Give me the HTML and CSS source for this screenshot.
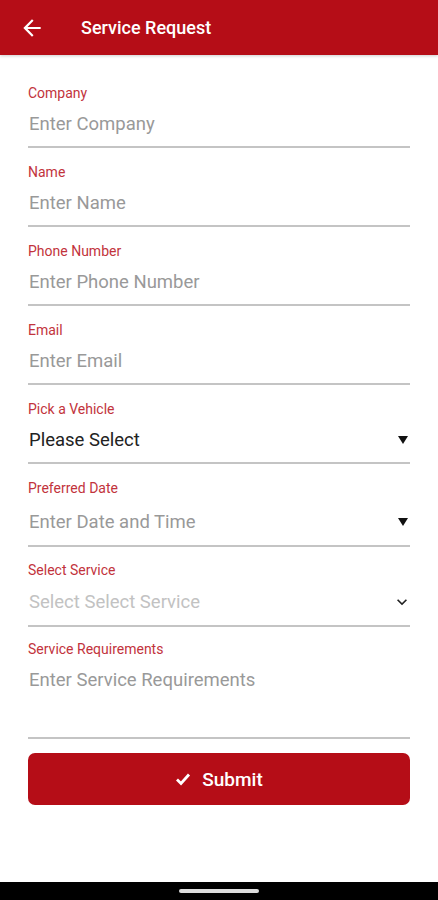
FILE: index.html
```html
<!DOCTYPE html>
<html lang="en">
<head>
    <meta charset="UTF-8">
    <meta name="viewport" content="width=device-width, initial-scale=1.0">
    <title>Service Request</title>
    <link rel="stylesheet" href="styles.css">
</head>
<body>
    <div class="page">
        <header class="toolbar">
            <svg class="back" viewBox="0 0 24 24"><path d="M20 11H7.83l5.59-5.59L12 4l-8 8 8 8 1.41-1.41L7.83 13H20v-2z"/></svg>
            <h1>Service Request</h1>
        </header>

        <form class="form">
            <div class="field">
                <label>Company</label>
                <div class="row placeholder">Enter Company</div>
            </div>
            <div class="field">
                <label>Name</label>
                <div class="row placeholder">Enter Name</div>
            </div>
            <div class="field">
                <label>Phone Number</label>
                <div class="row placeholder">Enter Phone Number</div>
            </div>
            <div class="field">
                <label>Email</label>
                <div class="row placeholder">Enter Email</div>
            </div>
            <div class="field">
                <label>Pick a Vehicle</label>
                <div class="row value">
                    <span>Please Select</span>
                    <svg class="caret" viewBox="0 0 10 8"><polygon points="0,0 10,0 5,8"/></svg>
                </div>
            </div>
            <div class="field field-date">
                <label>Preferred Date</label>
                <div class="row placeholder">
                    <span>Enter Date and Time</span>
                    <svg class="caret" viewBox="0 0 10 8"><polygon points="0,0 10,0 5,8"/></svg>
                </div>
            </div>
            <div class="field field-service">
                <label>Select Service</label>
                <div class="row placeholder light">
                    <span>Select Select Service</span>
                    <svg class="chevron" viewBox="0 0 24 24"><path d="M16.59 8.59L12 13.17 7.41 8.59 6 10l6 6 6-6z"/></svg>
                </div>
            </div>
            <div class="field field-notes">
                <label>Service Requirements</label>
                <div class="row placeholder">Enter Service Requirements</div>
            </div>

            <button type="button" class="submit">
                <svg class="check" viewBox="0 0 16 16"><path d="M2 8.5l4 4 8-9"/></svg>
                Submit
            </button>
        </form>

        <div class="navbar"><span class="handle"></span></div>
    </div>
</body>
</html>
```

FILE: styles.css
```css
body {
    margin: 0;
    font-family: Roboto, "Noto Sans", Arial, sans-serif;
    background: #fff;
}
.page {
    display: flex;
    flex-direction: column;
    min-height: 100vh;
}
.toolbar {
    height: 55px;
    background-color: #b50d17;
    display: flex;
    align-items: center;
    padding-left: 19px;
    box-shadow: 0 1px 3px rgba(0, 0, 0, 0.2);
}
.back {
    width: 26px;
    height: 26px;
    fill: #fff;
}
.toolbar h1 {
    margin: 0 0 0 36px;
    color: #fff;
    font-size: 18px;
    font-weight: 500;
}
.form {
    padding: 30px 28px 0;
}
.field {
    margin-bottom: 16px;
    border-bottom: 2px solid #c4c4c4;
}
.field label {
    display: block;
    font-size: 14px;
    line-height: 16px;
    color: #c2333c;
}
.row {
    height: 45px;
    display: flex;
    align-items: center;
    justify-content: space-between;
    font-size: 18.5px;
    padding-left: 1px;
}
.placeholder {
    color: #999;
}
.light {
    color: #c2c2c2;
}
.value {
    color: #222;
}
.caret {
    width: 10px;
    height: 8px;
    fill: #111;
    margin-right: 2px;
}
.chevron {
    width: 20px;
    height: 20px;
    fill: #222;
    margin-right: -2px;
}
.field-date {
    margin-bottom: 15px;
}
.field-date .row {
    height: 49px;
    padding-top: 3px;
    box-sizing: border-box;
}
.field-service {
    margin-bottom: 14px;
}
.field-service .row {
    height: 47px;
}
.field-notes {
    margin-bottom: 14px;
}
.field-notes .row {
    height: 80px;
    align-items: flex-start;
    padding-top: 11px;
    line-height: 24px;
    box-sizing: border-box;
}
.submit {
    width: 100%;
    height: 52px;
    border: none;
    border-radius: 7px;
    background-color: #b50d17;
    color: #fff;
    font-family: inherit;
    font-size: 19px;
    font-weight: 500;
    display: flex;
    align-items: center;
    justify-content: center;
    gap: 11px;
    cursor: pointer;
}
.check {
    width: 16px;
    height: 16px;
    fill: none;
    stroke: #fff;
    stroke-width: 2.8;
}
.navbar {
    margin-top: auto;
    height: 18px;
    background: #000;
    display: flex;
    align-items: center;
    justify-content: center;
}
.handle {
    width: 80px;
    height: 4px;
    border-radius: 2px;
    background: #ddd;
}
```
